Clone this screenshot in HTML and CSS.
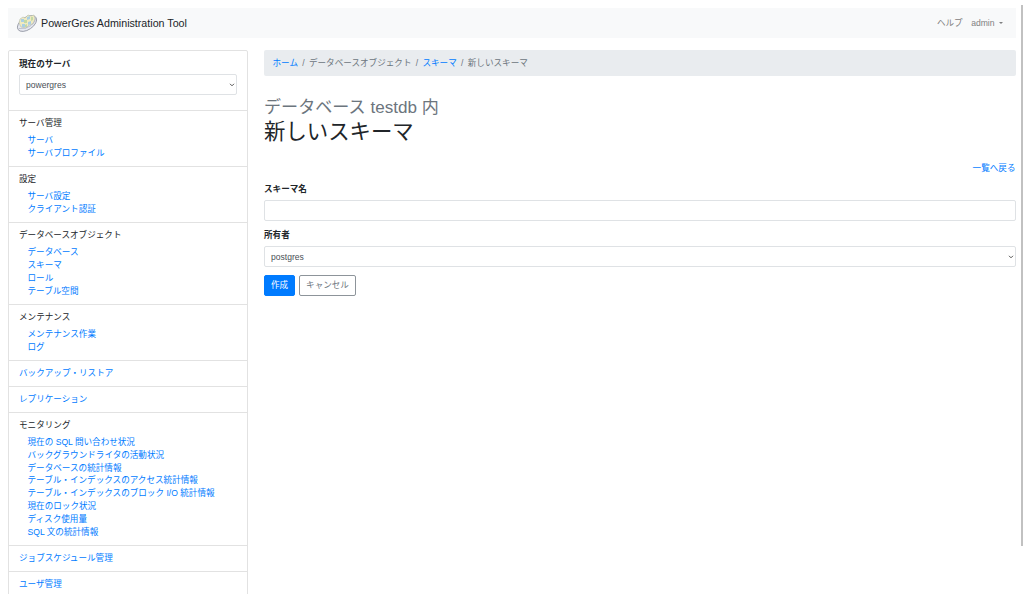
FILE: index.html
```html
<!DOCTYPE html>
<html lang="ja">
<head>
    <meta charset="UTF-8">
    <meta name="viewport" content="width=device-width, initial-scale=1.0">
    <title>PowerGres Administration Tool</title>
    <link rel="stylesheet" href="styles.css">
</head>
<body>
    <nav class="navbar">
        <a class="brand" href="#">
            <svg class="logo" viewBox="0 0 22 20">
                <ellipse cx="11" cy="10.5" rx="10.800" ry="6.200" transform="rotate(-34 11 10.5)" fill="#e6e8ef" stroke="#9a9eaa" stroke-width=".9"/>
                <path d="M4 6l3-2 2 1 3-3 3 1 3-1 1 4-2 5-4 1-3 3-5-1-2-4z" fill="#f0eac0" stroke="#b5bcae" stroke-width=".6"/>
                <path d="M5 6l3 0v3H5zM11 4l3-1v3l-3 1zM12 9l3-1v3l-3 1zM6 11l3 0v3H6z" fill="#a9cfe4"/>
                <path d="M8 7l3 0v3H8zM15 4l2 0v3l-2 1zM9 12l2-1v3H9z" fill="#c3d9a4"/>
                <path d="M3 15.500q7 1 12-3 4-3 5-8" fill="none" stroke="#b4b8c4" stroke-width=".8"/>
            </svg>
            <span>PowerGres Administration Tool</span>
        </a>
        <div class="nav-links">
            <a href="#">ヘルプ</a>
            <a class="dropdown" href="#">admin</a>
        </div>
    </nav>

    <div class="container">
        <aside class="sidebar">
            <div class="item server">
                <label class="label" for="server">現在のサーバ</label>
                <div class="select-box">
                    <select class="control" id="server"><option>powergres</option></select>
                    <svg class="chevron" viewBox="0 0 6 4"><path d="M1 .8l2 2 2-2"/></svg>
                </div>
            </div>
            <div class="item">
                サーバ管理
                <ul>
                    <li><a href="#">サーバ</a></li>
                    <li><a href="#">サーバプロファイル</a></li>
                </ul>
            </div>
            <div class="item">
                設定
                <ul>
                    <li><a href="#">サーバ設定</a></li>
                    <li><a href="#">クライアント認証</a></li>
                </ul>
            </div>
            <div class="item">
                データベースオブジェクト
                <ul>
                    <li><a href="#">データベース</a></li>
                    <li><a href="#">スキーマ</a></li>
                    <li><a href="#">ロール</a></li>
                    <li><a href="#">テーブル空間</a></li>
                </ul>
            </div>
            <div class="item">
                メンテナンス
                <ul>
                    <li><a href="#">メンテナンス作業</a></li>
                    <li><a href="#">ログ</a></li>
                </ul>
            </div>
            <div class="item"><a href="#">バックアップ・リストア</a></div>
            <div class="item"><a href="#">レプリケーション</a></div>
            <div class="item">
                モニタリング
                <ul>
                    <li><a href="#">現在の SQL 問い合わせ状況</a></li>
                    <li><a href="#">バックグラウンドライタの活動状況</a></li>
                    <li><a href="#">データベースの統計情報</a></li>
                    <li><a href="#">テーブル・インデックスのアクセス統計情報</a></li>
                    <li><a href="#">テーブル・インデックスのブロック I/O 統計情報</a></li>
                    <li><a href="#">現在のロック状況</a></li>
                    <li><a href="#">ディスク使用量</a></li>
                    <li><a href="#">SQL 文の統計情報</a></li>
                </ul>
            </div>
            <div class="item"><a href="#">ジョブスケジュール管理</a></div>
            <div class="item"><a href="#">ユーザ管理</a></div>
        </aside>

        <main class="content">
            <ol class="breadcrumb">
                <li><a href="#">ホーム</a></li>
                <li>データベースオブジェクト</li>
                <li><a href="#">スキーマ</a></li>
                <li>新しいスキーマ</li>
            </ol>
            <h1><small>データベース testdb 内</small>新しいスキーマ</h1>
            <div class="back"><a href="#">一覧へ戻る</a></div>
            <form>
                <div class="form-group">
                    <label class="label" for="name">スキーマ名</label>
                    <input class="control" id="name" type="text">
                </div>
                <div class="form-group">
                    <label class="label" for="owner">所有者</label>
                    <div class="select-box">
                        <select class="control" id="owner"><option>postgres</option></select>
                        <svg class="chevron" viewBox="0 0 6 4"><path d="M1 .8l2 2 2-2"/></svg>
                    </div>
                </div>
                <div class="buttons">
                    <button class="btn primary" type="button">作成</button>
                    <button class="btn secondary" type="button">キャンセル</button>
                </div>
            </form>
        </main>
    </div>
    <div class="scrollbar"></div>
</body>
</html>
```

FILE: styles.css
```css
* {
    margin: 0;
    padding: 0;
    box-sizing: border-box;
}

html {
    font-size: 8.59px;
}

body {
    height: 594px;
    padding: 8px 8.5px 0 8px;
    overflow: hidden;
    background-color: #fff;
    color: #212529;
    font-family: "Liberation Sans", "Noto Sans CJK JP", sans-serif;
    line-height: 12.84px;
}

a {
    color: #007bff;
    text-decoration: none;
}

ul, ol {
    list-style: none;
}

/* Navigation bar */
.navbar {
    display: flex;
    align-items: center;
    justify-content: space-between;
    height: 30px;
    padding: 0 13px 0 8px;
    background-color: #f8f9fa;
}

.brand {
    display: flex;
    align-items: center;
    gap: 3px;
    color: #212529;
    font-size: 10.7px;
}

.logo {
    width: 22px;
    height: 20px;
}

.nav-links {
    display: flex;
    align-items: center;
    gap: 8.5px;
}

.nav-links a {
    color: #7f8081;
}

.dropdown::after {
    content: "";
    display: inline-block;
    margin-left: 4px;
    vertical-align: 2px;
    border-top: 2.5px solid;
    border-right: 2.5px solid transparent;
    border-left: 2.5px solid transparent;
}

.container {
    display: flex;
    align-items: flex-start;
    gap: 16px;
    margin-top: 12px;
}

/* Sidebar */
.sidebar {
    flex: none;
    width: 240px;
    border: 1px solid #e2e2e2;
    border-radius: 2px;
}

.item {
    padding: 6.08px 10px;
    border-bottom: 1px solid #e2e2e2;
}

.item ul {
    margin-top: 4.3px;
    padding-left: 8.56px;
}

.server {
    height: 60px;
    padding-top: 7px;
}

.label {
    display: block;
    margin-bottom: 4.3px;
    font-weight: bold;
}

.server .label {
    margin-bottom: 3.6px;
}

.control {
    display: block;
    width: 100%;
    height: 21px;
    padding: 0 6px;
    border: 1px solid #dfe2e5;
    border-radius: 2px;
    background-color: #fff;
    color: #495057;
    font-family: inherit;
    font-size: 8.56px;
    appearance: none;
}

.select-box {
    position: relative;
}

.chevron {
    position: absolute;
    top: 9px;
    right: 2px;
    width: 6px;
    height: 4px;
    fill: none;
    stroke: #555;
    pointer-events: none;
}

/* Main content */
.content {
    flex: 1;
}

.breadcrumb {
    display: flex;
    align-items: center;
    height: 26px;
    padding: 1px 8.5px 0;
    border-radius: 2px;
    background-color: #e9ecef;
    color: #6c757d;
}

.breadcrumb li + li::before {
    content: "/";
    padding: 0 4.3px;
}

h1 {
    margin-top: 20px;
    font-size: 21.4px;
    font-weight: normal;
    line-height: 25.7px;
}

h1 small {
    display: block;
    color: #6c757d;
    font-size: 17.1px;
    line-height: 24px;
}

.back {
    margin-top: 16px;
    text-align: right;
}

form {
    margin-top: 8.5px;
}

.form-group {
    margin-bottom: 8px;
}

.buttons {
    display: flex;
    gap: 4px;
}

.btn {
    height: 21px;
    padding: 0 6px;
    border: 1px solid;
    border-radius: 2px;
    font-family: inherit;
    font-size: 8.56px;
    line-height: 1.5;
}

.primary {
    border-color: #007bff;
    background-color: #007bff;
    color: #fff;
}

.secondary {
    border-color: #8d949a;
    background-color: #fff;
    color: #6c757d;
}

/* Page scroll thumb */
.scrollbar {
    position: absolute;
    top: 5px;
    right: 1px;
    width: 2px;
    height: 541px;
    background-color: #c1c1c1;
}
```
